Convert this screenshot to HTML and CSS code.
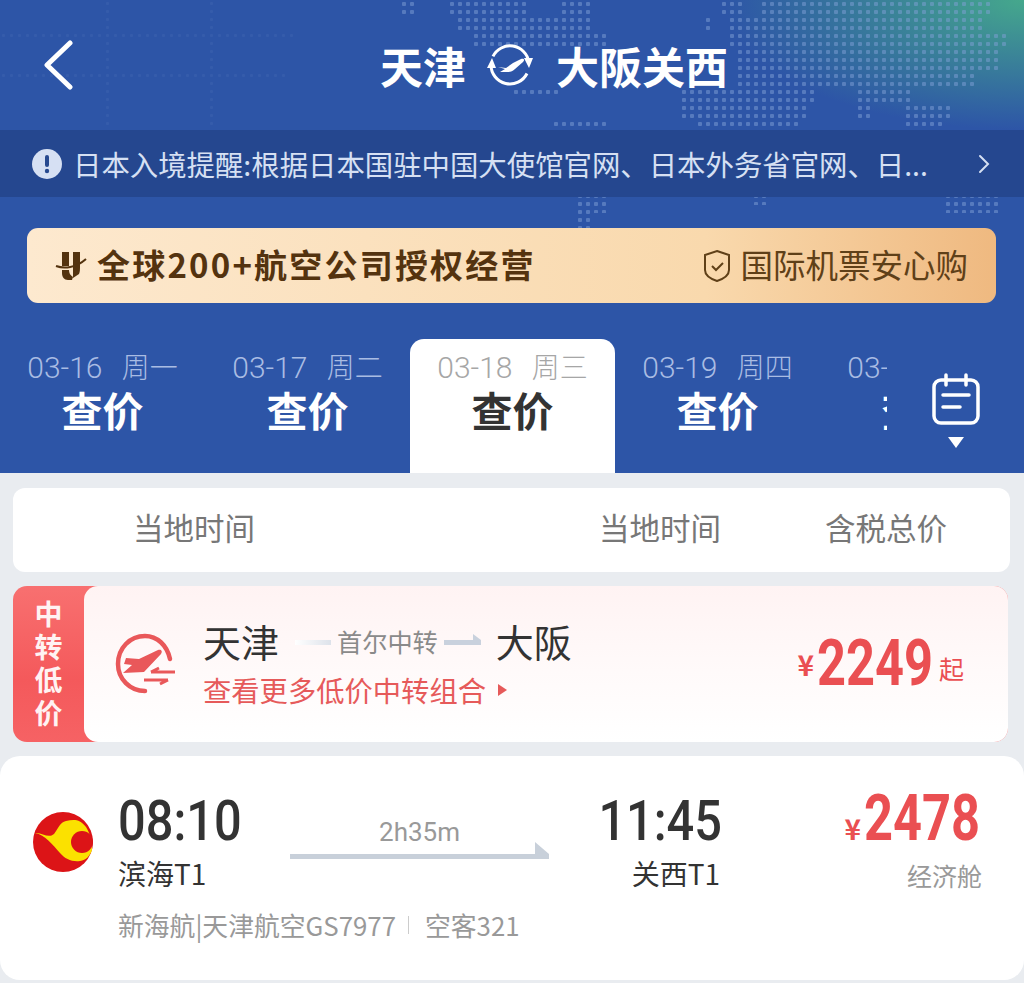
FILE: index.html
```html
<!DOCTYPE html>
<html lang="zh-CN">

<head>
    <meta charset="UTF-8">
    <meta name="viewport" content="width=device-width, initial-scale=1.0">
    <title>天津 - 大阪关西</title>
    <link rel="stylesheet" href="styles.css">
</head>

<body>
    <!-- Blue header -->
    <header class="top">
        <!-- World map dots, behind the header content -->
        <svg class="map" width="1024" height="340" viewBox="0 0 1024 340">
            <defs>
                <pattern id="dot" width="8" height="8" patternUnits="userSpaceOnUse">
                    <rect x="2" y="2" width="4" height="4" rx="1" fill="#7f9fd6" fill-opacity="0.5" />
                </pattern>
                <pattern id="faint" width="8" height="8" patternUnits="userSpaceOnUse">
                    <rect x="2" y="2" width="3" height="3" rx="1" fill="#7f9fd6" fill-opacity="0.1" />
                </pattern>
            </defs>
            <path fill="url(#faint)" d="M0 32h296v8H0zM0 72h290v8H0zM104 0h8v130h-8zM208 0h8v130h-8z" />
            <path fill="url(#dot)" d="M400 0h16v16h-16zM448 0h80v16h-80zM560 0h32v16h-32zM720 0h24v16h-24zM760 0h232v16H760zM456 16h136v16H456zM704 16h8v16h-8zM728 16h256v16H728zM472 32h136v16H472zM728 32h280v16H728zM736 48h264v24H736zM736 72h240v16H736zM512 88h48v8h-48zM680 88h136v16H680zM856 88h56v16h-56zM680 104h128v16H680zM856 104h16v16h-16zM904 104h48v16h-48zM552 120h56v10h-56zM696 120h104v10H696zM904 120h40v10h-40zM576 197h32v16h-32zM752 197h16v8h-16zM944 197h56v16h-56zM576 213h16v16h-16z" />
        </svg>

        <div class="title-row">
            <svg class="back" width="30" height="50" viewBox="0 0 30 50">
                <path d="M27 3 4 25l23 22" fill="none" stroke="#fff" stroke-width="5" stroke-linecap="round" stroke-linejoin="round" />
            </svg>
            <h1 class="route">
                <span>天津</span>
                <svg class="swap" width="46" height="44" viewBox="0 0 46 44">
                    <path d="M6 13.4A19 19 0 0 1 41.8 19" fill="none" stroke="#fff" stroke-width="3" />
                    <path d="M4 22A19 19 0 0 0 40 30.5" fill="none" stroke="#fff" stroke-width="3" />
                    <path d="M0 25h9L5 15zM37 15h9l-4 10z" fill="#fff" />
                    <path d="M11 24l8 1 7-5 8-4c3-1 4 1 2 3l-8 7c-2 2-4 3-7 3h-8l5-3z" fill="#fff" />
                </svg>
                <span>大阪关西</span>
            </h1>
        </div>

        <div class="notice">
            <svg width="30" height="30" viewBox="0 0 30 30">
                <circle cx="15" cy="15" r="15" fill="#d6e0f3" />
                <rect x="13" y="6" width="4" height="12" rx="2" fill="#27498f" />
                <circle cx="15" cy="22" r="2.2" fill="#27498f" />
            </svg>
            <p class="notice-text">日本入境提醒:根据日本国驻中国大使馆官网、日本外务省官网、日...</p>
            <svg class="notice-arrow" width="12" height="20" viewBox="0 0 12 20">
                <path d="M2 2l8 8-8 8" fill="none" stroke="#d6e0f3" stroke-width="2" stroke-linecap="round" />
            </svg>
        </div>

        <div class="banner">
            <svg width="32" height="30" viewBox="0 0 32 30">
                <path d="M7 1h7v14h-7zM18 1h7v14c0 3 0 6-1 8l-6 4zM7 19h7c0 3 1 5 4 7l-1 3h-4c-4 0-6-3-6-7z" fill="#54330f" />
                <path d="M1 15c8 3 20 2 30-7" fill="none" stroke="#54330f" stroke-width="2" />
            </svg>
            <strong class="banner-main">全球200+航空公司授权经营</strong>
            <svg class="shield" width="28" height="34" viewBox="0 0 28 34">
                <path d="M14 2 26 6v15c0 5-6 9-12 11C8 30 2 26 2 21V6z" fill="none" stroke="#5f4018" stroke-width="2" />
                <path d="M9 17l4 4 7-7" fill="none" stroke="#5f4018" stroke-width="2" />
            </svg>
            <span class="banner-side">国际机票安心购</span>
        </div>

        <div class="dates">
            <div class="date-list">
                <div class="date-tab"><p class="date-day">03-16 <span>周一</span></p><p class="date-price">查价</p></div>
                <div class="date-tab"><p class="date-day">03-17 <span>周二</span></p><p class="date-price">查价</p></div>
                <div class="date-tab active"><p class="date-day">03-18 <span>周三</span></p><p class="date-price">查价</p></div>
                <div class="date-tab"><p class="date-day">03-19 <span>周四</span></p><p class="date-price">查价</p></div>
                <div class="date-tab"><p class="date-day">03-20 <span>周五</span></p><p class="date-price">查价</p></div>
            </div>
            <div class="calendar">
                <svg width="48" height="52" viewBox="0 0 48 52">
                    <rect x="2" y="7" width="44" height="43" rx="7" fill="none" stroke="#fff" stroke-width="3.5" />
                    <path d="M14 2v10M34 2v10" stroke="#fff" stroke-width="3.5" stroke-linecap="round" />
                    <path d="M11 22h26M11 34h17" stroke="#fff" stroke-width="3.5" stroke-linecap="round" />
                </svg>
                <span class="calendar-caret"></span>
            </div>
        </div>
    </header>

    <main class="content">
        <!-- Column titles -->
        <div class="columns">
            <span>当地时间</span>
            <span>当地时间</span>
            <span>含税总价</span>
        </div>

        <!-- Transfer offer -->
        <section class="transfer">
            <div class="transfer-tag">中转低价</div>
            <div class="transfer-body">
                <svg class="transfer-icon" width="64" height="64" viewBox="0 0 64 64">
                    <path d="M57 27C54 13 44 4 32 4 17 4 5 16 5 32c0 15 12 27 27 27" fill="none" stroke="#e9585a" stroke-width="4.5" stroke-linecap="round" />
                    <path d="M13 26l13 1 19-9c3-1 5 1 3 4L31 40l-21 1 9-8-8-1z" fill="#e9585a" />
                    <path d="M38 40h24M38 40l8-4M31 48h24M55 48l-8 4" fill="none" stroke="#e9585a" stroke-width="3" />
                </svg>
                <div class="transfer-info">
                    <div class="transfer-route">
                        <span class="city">天津</span>
                        <i class="line-in"></i>
                        <span class="via">首尔中转</span>
                        <i class="line-out"></i>
                        <span class="city">大阪</span>
                    </div>
                    <p class="transfer-link">查看更多低价中转组合<i class="link-caret"></i></p>
                </div>
                <p class="transfer-price"><small>¥</small><b>2249</b><em>起</em></p>
            </div>
        </section>

        <!-- Flight -->
        <section class="flight">
            <div class="flight-main">
                <svg class="logo" width="60" height="60" viewBox="0 0 60 60">
                    <circle cx="30" cy="30" r="30" fill="#dc1417" />
                    <path d="M2 21C9 20 15 27 21 22 25 17 27 10 33 9c8-2 14-2 20 6 4 6 6 15 6 23-2 6-6 10-12 11-8 1-15-2-20-8C20 33 12 23 2 21z" fill="#fbe100" />
                    <circle cx="49" cy="30" r="11" fill="#dc1417" />
                </svg>
                <div class="leg">
                    <p class="time">08:10</p>
                    <p class="airport">滨海T1</p>
                </div>
                <div class="duration">
                    <span>2h35m</span>
                    <i class="duration-line"></i>
                </div>
                <div class="leg leg-end">
                    <p class="time">11:45</p>
                    <p class="airport">关西T1</p>
                </div>
                <div class="fare">
                    <p class="fare-price"><small>¥</small><b>2478</b></p>
                    <p class="fare-class">经济舱</p>
                </div>
            </div>
            <p class="flight-meta"><span>新海航|天津航空GS7977</span><i></i><span>空客321</span></p>
        </section>
    </main>
</body>

</html>
```

FILE: styles.css
```css
* {
    box-sizing: border-box;
}

body {
    margin: 0;
    width: 1024px;
    height: 983px;
    overflow: hidden;
    font-family: "Noto Sans CJK SC", "Noto Sans", sans-serif;
    background-color: #e9ecf0;
    color: #333;
}

p,
h1 {
    margin: 0;
}

/* Header */
.top {
    position: relative;
    height: 473px;
    background-color: #2d55a7;
    background-image: radial-gradient(ellipse 300px 130px at 100% 0, #45a88c 0, rgba(69, 168, 140, 0) 100%);
}

.map {
    position: absolute;
    top: 0;
    left: 0;
}

.title-row {
    position: relative;
    display: flex;
    align-items: center;
    height: 130px;
    padding-left: 43px;
}

.route {
    display: flex;
    align-items: center;
    margin-left: 307px;
    font-size: 43px;
    font-weight: 700;
    color: #fff;
}

.swap {
    margin: 0 23px 0 21px;
}

.notice {
    position: relative;
    display: flex;
    align-items: center;
    height: 67px;
    padding: 0 34px 0 32px;
    background-color: #25478f;
    color: #d6e0f3;
}

.notice-text {
    margin-left: 11px;
    font-size: 28.4px;
    white-space: nowrap;
}

.notice-arrow {
    margin-left: auto;
}

.banner {
    position: relative;
    display: flex;
    align-items: center;
    height: 75px;
    margin: 31px 28px 0 27px;
    padding: 0 28px 0 28px;
    border-radius: 11px;
    background: linear-gradient(90deg, #fde9cf 0%, #f9d9ad 70%, #efb980 100%);
    color: #54330f;
}

.banner-main {
    margin-left: 10px;
    padding-bottom: 4px;
    font-size: 33px;
    letter-spacing: 2.2px;
    white-space: nowrap;
}

.shield {
    margin-left: auto;
}

.banner-side {
    margin-left: 9px;
    padding-bottom: 4px;
    font-size: 32.5px;
    white-space: nowrap;
    color: #5f4018;
}

/* Date tabs */
.dates {
    position: relative;
    display: flex;
    height: 134px;
    margin-top: 36px;
}

.date-list {
    display: flex;
    width: 887px;
    overflow: hidden;
}

.date-tab {
    flex: 0 0 205px;
    padding-top: 11px;
    text-align: center;
    border-radius: 14px 14px 0 0;
    color: #fff;
}

.date-day {
    font-family: Roboto, "Noto Sans CJK SC", sans-serif;
    font-size: 30px;
    font-weight: 300;
    line-height: 35px;
    white-space: nowrap;
    color: #a9bce3;
}

.date-day span {
    margin-left: 12px;
    font-size: 28px;
}

.date-price {
    font-size: 41px;
    font-weight: 700;
    line-height: 46px;
}

.date-tab.active {
    background-color: #fff;
    color: #333;
}

.date-tab.active .date-day {
    color: #a6a6a6;
}

.calendar {
    flex: 1;
    display: flex;
    flex-direction: column;
    align-items: center;
    padding-top: 34px;
}

.calendar-caret {
    margin-top: 12px;
    border-left: 8px solid transparent;
    border-right: 8px solid transparent;
    border-top: 11px solid #fff;
}

/* Content */
.content {
    padding-top: 15px;
}

.columns {
    display: grid;
    grid-template-columns: 466px 226px 1fr;
    align-items: center;
    height: 84px;
    margin: 0 14px 0 13px;
    padding-left: 120px;
    padding-bottom: 6px;
    border-radius: 12px;
    background-color: #fff;
    font-size: 30.5px;
    color: #777;
}

.transfer {
    display: flex;
    height: 156px;
    margin: 14px 16px 0 13px;
    border-radius: 14px;
    background: linear-gradient(180deg, #f87070 0%, #f4595b 60%, #f66264 100%);
    overflow: hidden;
}

.transfer-tag {
    display: flex;
    align-items: center;
    justify-content: center;
    width: 71px;
    padding-top: 4px;
    writing-mode: vertical-rl;
    text-orientation: upright;
    font-size: 28px;
    font-weight: 700;
    letter-spacing: 5px;
    color: #fff3f3;
}

.transfer-body {
    flex: 1;
    display: flex;
    align-items: center;
    border-radius: 14px 0 0 14px;
    background: linear-gradient(180deg, #fff3f3 0%, #fffafa 55%, #fff 100%);
}

.transfer-icon {
    margin-left: 29px;
}

.transfer-info {
    margin-left: 26px;
    margin-bottom: 2px;
}

.transfer-route {
    display: flex;
    align-items: center;
    height: 50px;
}

.city {
    font-size: 38px;
    color: #333;
}

.via {
    margin: 0 6px;
    font-size: 25.2px;
    color: #8a8a8a;
}

.line-in,
.line-out {
    width: 36px;
    height: 5px;
    margin: 4px 0 0 16px;
    background: linear-gradient(90deg, #fff, #dde2ea);
}

.line-out {
    position: relative;
    width: 37px;
    margin: 4px 15px 0 0;
    background: #c9d1dd;
}

.line-out::after {
    content: "";
    position: absolute;
    right: 0;
    top: -6px;
    border-left: 8px solid #c9d1dd;
    border-top: 6px solid transparent;
}

.transfer-link {
    display: flex;
    align-items: center;
    margin-top: 3px;
    font-size: 28.3px;
    line-height: 42px;
    color: #e65a5a;
}

.link-caret {
    margin-left: 12px;
    border-left: 9px solid #e65a5a;
    border-top: 6px solid transparent;
    border-bottom: 6px solid transparent;
}

.transfer-price {
    display: flex;
    align-items: center;
    margin-left: auto;
    margin-right: 44px;
    color: #ea4f52;
}

small {
    font-size: 28px;
    font-weight: 700;
    margin-right: 3px;
}

/* No condensed font here, so the price digits are squeezed to the narrow width */
.transfer-price b,
.fare-price b {
    display: inline-block;
    font-family: Roboto, sans-serif;
    font-weight: 700;
    font-size: 64px;
    white-space: nowrap;
    transform-origin: left center;
    transform: scaleX(0.79);
}

.transfer-price b {
    width: 116px;
    line-height: 60px;
}

.transfer-price em {
    margin: 8px 0 0 6px;
    font-size: 25px;
    font-style: normal;
}

.flight {
    height: 224px;
    margin-top: 14px;
    padding: 36px 42px 0 33px;
    border-radius: 20px;
    background-color: #fff;
}

.flight-main {
    display: flex;
    align-items: flex-start;
}

.logo {
    margin-top: 20px;
}

.leg {
    width: 130px;
    margin-left: 25px;
}

.leg-end {
    width: 173px;
    margin-left: 0;
    text-align: right;
}

.time {
    font-family: Roboto, sans-serif;
    font-size: 56px;
    font-weight: 500;
    line-height: 58px;
    white-space: nowrap;
    color: #333;
    transform-origin: left center;
    transform: scaleX(0.87);
}

.leg-end .time {
    transform-origin: right center;
}

.airport {
    font-size: 28px;
    line-height: 46px;
}

.leg-end .airport {
    padding-right: 2px;
}

.duration {
    display: flex;
    flex-direction: column;
    align-items: center;
    width: 259px;
    margin-left: 42px;
    padding-top: 22px;
    font-family: Roboto, sans-serif;
    font-size: 26px;
    line-height: 36px;
    color: #999;
}

.duration-line {
    position: relative;
    width: 100%;
    height: 5px;
    margin-top: 4px;
    background-color: #c8d0da;
}

.duration-line::after {
    content: "";
    position: absolute;
    right: 0;
    top: -12px;
    border-left: 14px solid #c8d0da;
    border-top: 12px solid transparent;
}

.fare {
    margin-left: auto;
    text-align: right;
}

.fare-price {
    display: flex;
    align-items: baseline;
    justify-content: flex-end;
    margin-top: -4px;
    color: #ea4f52;
}

.fare-price b {
    width: 118px;
    line-height: 62px;
    text-align: left;
}

.fare-class {
    margin-top: 3px;
    font-size: 25px;
    line-height: 44px;
    color: #999;
}

.flight-meta {
    display: flex;
    align-items: center;
    margin: 10px 0 0 85px;
    font-size: 25.8px;
    line-height: 36px;
    color: #999;
}

.flight-meta i {
    width: 1px;
    height: 18px;
    margin: 0 16px 0 12px;
    background-color: #ccc;
}
```
